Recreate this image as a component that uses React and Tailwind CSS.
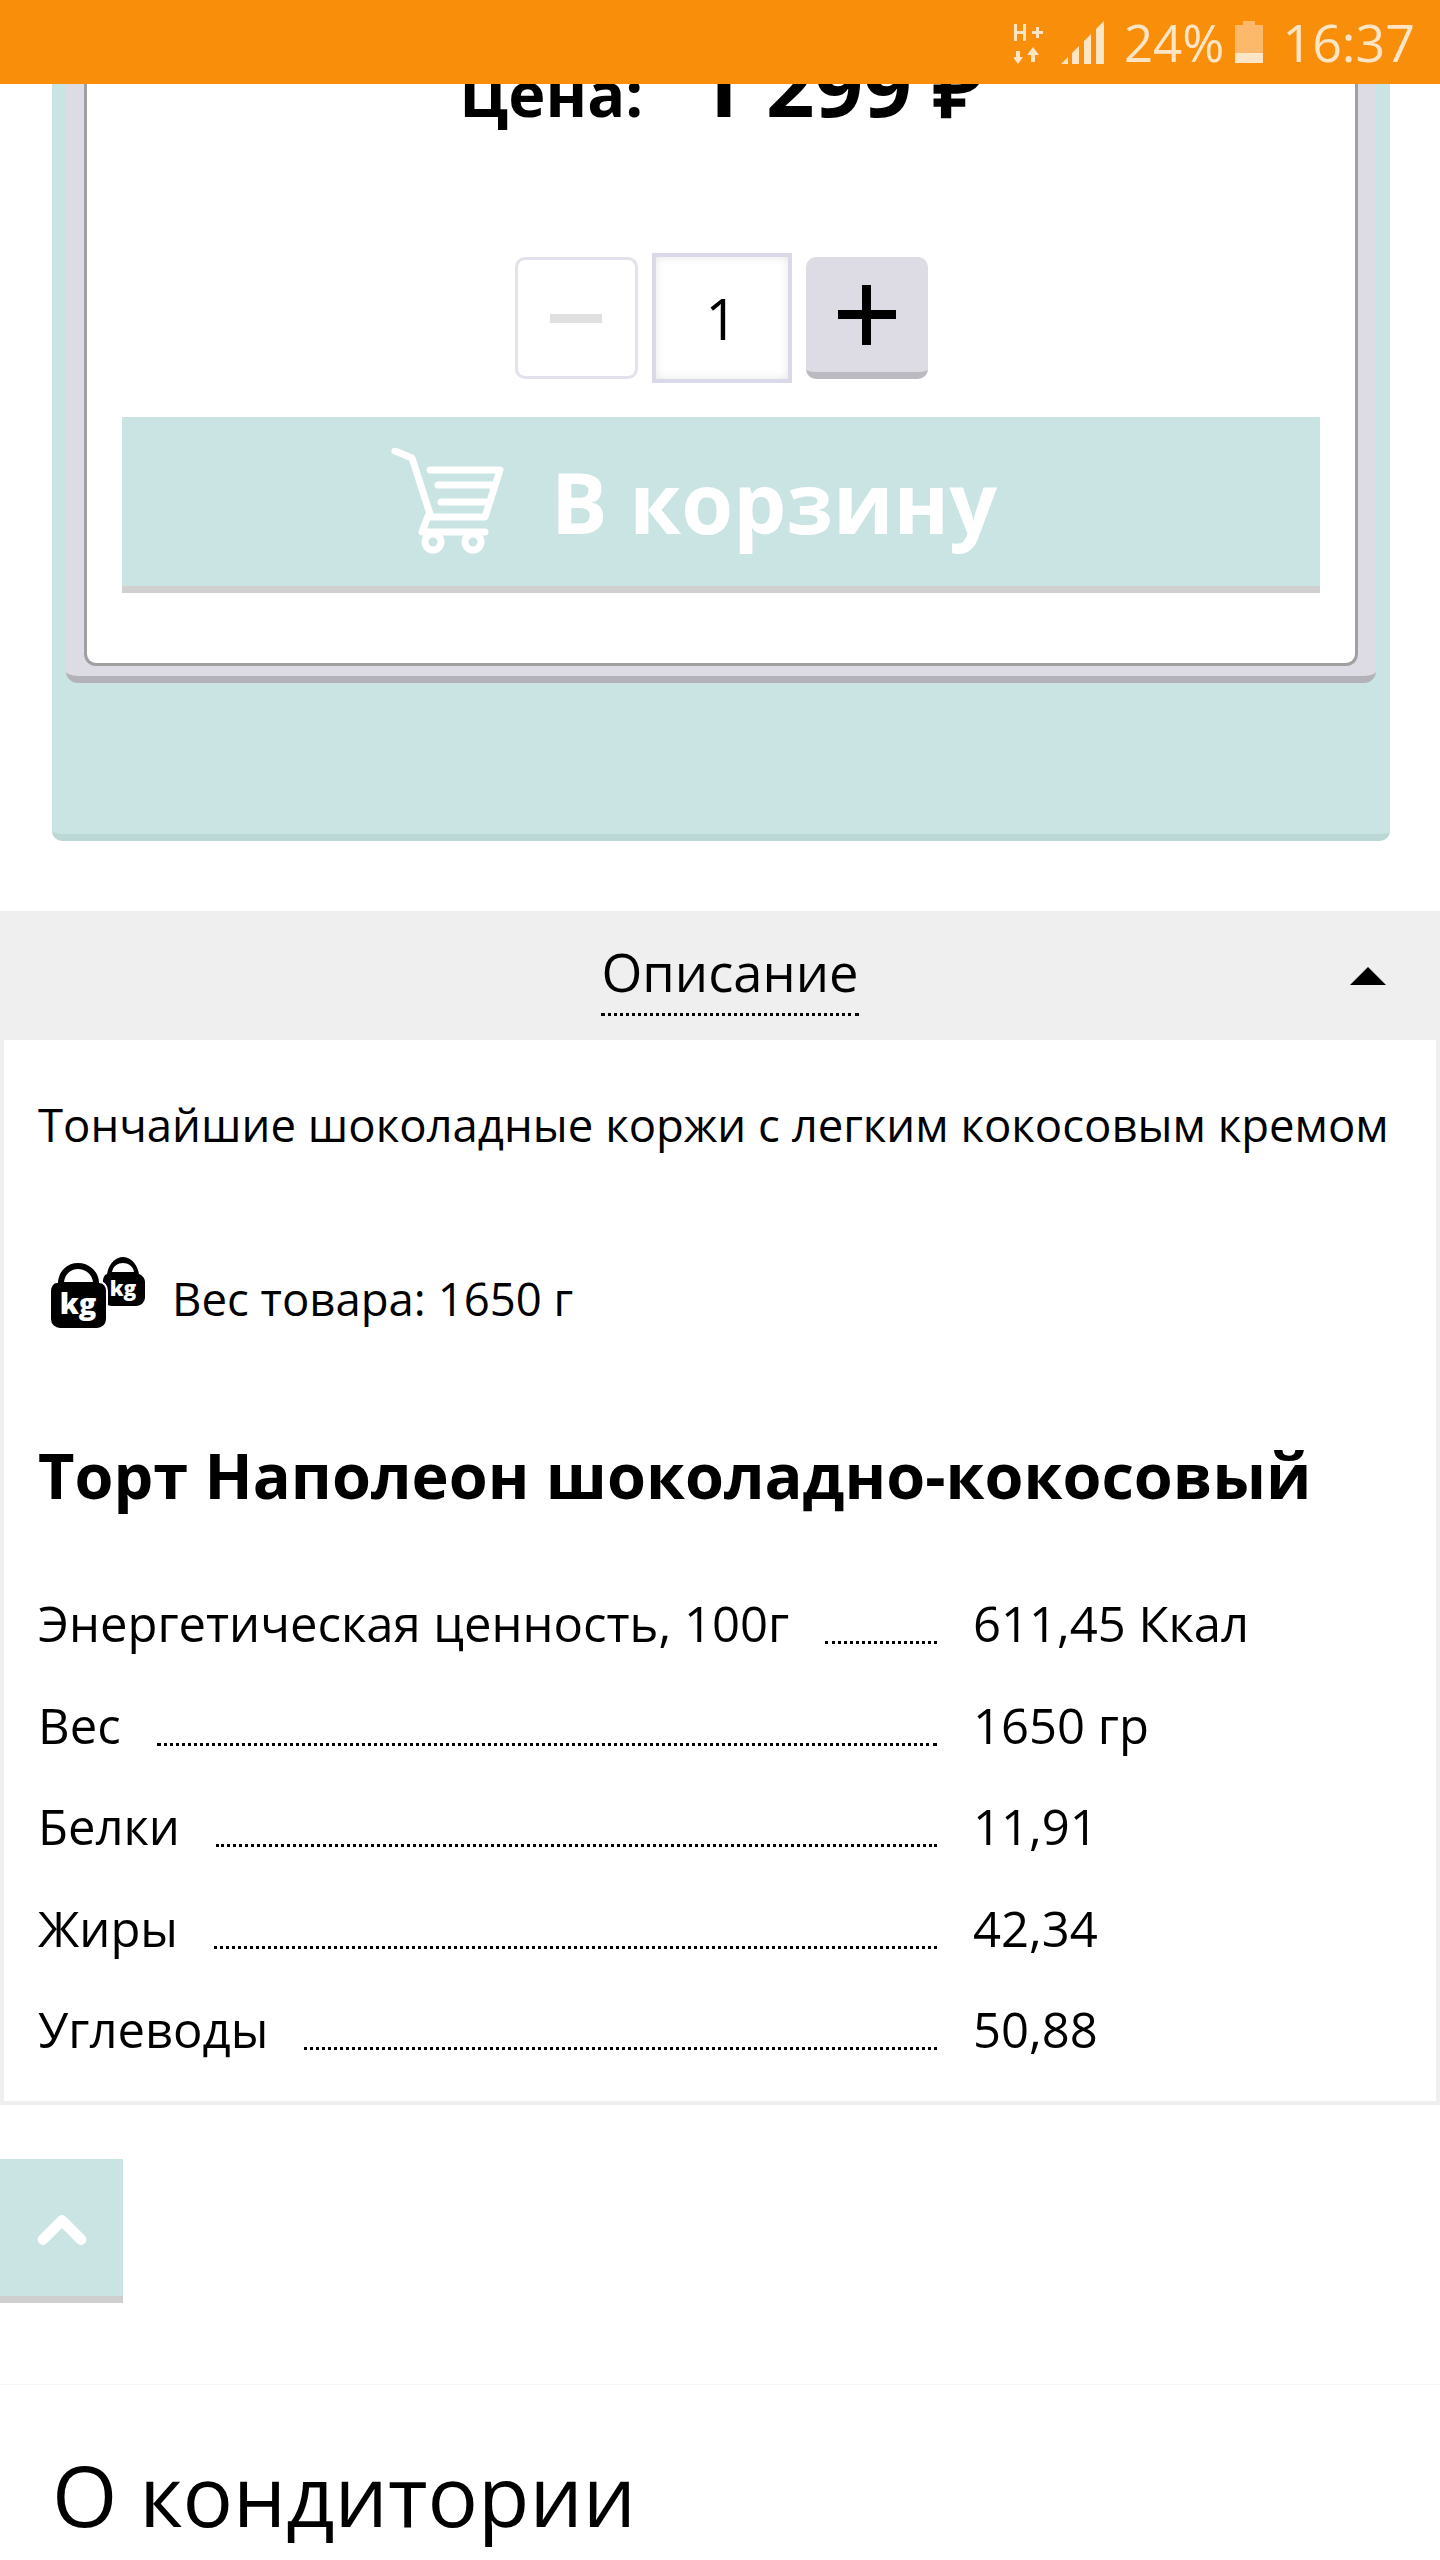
import { ChevronUp } from "lucide-react"

const font = { fontFamily: '"Open Sans", sans-serif' }

function StatusBar() {
  return (
    <div className="absolute inset-x-0 top-0 z-10 flex h-[84px] items-center justify-end bg-[#f88e0a] pr-[25px] text-[#fde5c6]">
      <svg width="30" height="42" viewBox="0 0 30 42" className="mr-[17px] mt-[2px]" fill="#fde5c6">
        <path d="M0 2h3v7h6V2h3v17H9v-7H3v7H0zM18 9h4V5h3v4h4v3h-4v4h-3v-4h-4z" />
        <path d="M4 42l-5-7h3v-6h4v6h3zM19 25l6 8h-4v7h-4v-7h-4z" />
      </svg>
      <svg width="43" height="43" viewBox="0 0 43 43" className="mr-[20px]" fill="#fde5c6">
        <path d="M0 43l7-7v7zM11 32l7-7v18h-7zM23 20l7-7v30h-7zM35 8l8-8v43h-8z" />
      </svg>
      <span className="text-[51px]">24%</span>
      <svg width="28" height="42" viewBox="0 0 28 42" className="ml-[11px] mr-[19px]">
        <path d="M8 0h12v4h8v38H0V4h8z" fill="#fcb96b" />
        <path d="M0 32h28v10H0z" fill="#fde5c6" />
      </svg>
      <span className="text-[52px]">16:37</span>
    </div>
  )
}

function CartIcon() {
  return (
    <svg width="114" height="108" viewBox="0 0 114 108" fill="none" stroke="#fff" strokeWidth="7" strokeLinecap="round" strokeLinejoin="round">
      <path d="M4 3l17 7 19 59h54l15-47H39" />
      <path d="M47 37h53M50 54h45" />
      <path d="M37 68l-6 16h63" />
      <circle cx="42" cy="94" r="8" />
      <circle cx="82" cy="94" r="8" />
    </svg>
  )
}

function WeightIcon() {
  return (
    <svg width="96" height="74" viewBox="0 0 96 74" className="-mt-[8px] shrink-0">
      <path d="M57 17C59 6 66 0 73 0s14 6 16 17h0c3 1 6 4 6 8v15c0 5-4 9-9 9H62c-5 0-9-4-9-9V25c0-4 1-7 4-8z" fill="#000" />
      <path d="M62 15c1-6 6-9 11-9s10 3 11 9z" fill="#fff" />
      <path d="M7 25C8 13 17 5 28 5s21 8 22 20h-1c5 0 8 4 8 9v28c0 6-5 10-10 10H10C5 72 0 68 0 62V34c0-5 3-9 7-9z" fill="#000" stroke="#fff" strokeWidth="2" />
      <path d="M14 25c1-8 7-13 14-13s14 5 15 13z" fill="#fff" />
      <text x="28" y="57" textAnchor="middle" fontSize="29" fontWeight="800" fill="#fff" style={font}>kg</text>
      <text x="73" y="39" textAnchor="middle" fontSize="21" fontWeight="800" fill="#fff" style={font}>kg</text>
    </svg>
  )
}

const rows = [
  { label: "Энергетическая ценность, 100г", value: "611,45 Ккал" },
  { label: "Вес", value: "1650 гр" },
  { label: "Белки", value: "11,91" },
  { label: "Жиры", value: "42,34" },
  { label: "Углеводы", value: "50,88" },
]

export default function App() {
  return (
    <div className="relative h-[2560px] w-[1440px] overflow-hidden bg-white text-black" style={font}>
      <StatusBar />

      {/* карточка товара */}
      <div className="ml-[52px] mr-[50px] h-[841px] rounded-b-[10px] border-b-[7px] border-[#bcd8d6] bg-[#c9e4e2] px-[14px]">
        <div className="h-[683px] rounded-b-[12px] border-b-[7px] border-[#b3b2b8] bg-[#dddce4] px-[18px] pb-[10px]">
          <div className="flex h-full flex-col items-center rounded-b-[12px] border-x-[3px] border-b-[3px] border-[#a0a0a0] bg-white px-[35px] pt-[42px]">
            <div className="flex h-[85px] items-baseline font-bold leading-none">
              <span className="mr-[52px] text-[63px]">Цена:</span>
              <span className="text-[85px]">1 299 ₽</span>
            </div>

            <div className="mt-[126px] flex items-center">
              <div className="flex h-[122px] w-[123px] items-center justify-center rounded-[10px] border-[3px] border-[#e3e2ec] bg-white">
                <div className="h-[9px] w-[52px] bg-[#e0e0e0]" />
              </div>
              <div className="mx-[14px] flex h-[130px] w-[140px] items-center justify-center border-[4px] border-[#dad9e8] bg-white text-[56px] shadow-[inset_0_0_10px_rgba(0,0,0,0.1)]">
                1
              </div>
              <div className="relative flex h-[122px] w-[122px] items-center justify-center rounded-[10px] border-b-[7px] border-[#bbbac0] bg-[#dddce4]">
                <div className="h-[9px] w-[58px] bg-black" />
                <div className="absolute h-[60px] w-[9px] bg-black" />
              </div>
            </div>

            <div className="mt-[34px] flex h-[176px] w-full items-center justify-center gap-[46px] border-b-[7px] border-[#d0d0d0] bg-[#c9e4e2] pr-[54px] text-[84px] font-bold leading-none text-white">
              <CartIcon />
              <span>В корзину</span>
            </div>
          </div>
        </div>
      </div>

      {/* описание */}
      <div className="mt-[70px]">
        <div className="relative flex h-[129px] items-start justify-center bg-[#efefef] pt-[26px]">
          <span className="ml-[20px] border-b-[3px] border-dotted border-black pb-[6px] text-[52.5px] leading-[70px]">Описание</span>
          <div className="absolute right-[54px] top-[56px] h-0 w-0 border-x-[18px] border-b-[18px] border-x-transparent border-b-black" />
        </div>
        <div className="h-[1065px] border-x-[4px] border-b-[4px] border-[#efefef] pl-[34px] pr-[20px] pt-[49px]">
          <p className="whitespace-nowrap text-[45.5px] leading-[70px]">Тончайшие шоколадные коржи с легким кокосовым кремом</p>
          <div className="mt-[102px] flex h-[74px] items-center gap-[26px] pl-[12px] text-[45.5px]">
            <WeightIcon />
            <span>Вес товара: 1650 г</span>
          </div>
          <h2 className="mt-[100px] whitespace-nowrap text-[63px] font-bold leading-[80px]">Торт Наполеон шоколадно-кокосовый</h2>
          <div className="mt-[58px]">
            {rows.map((r) => (
              <div key={r.label} className="flex h-[101.5px] items-center text-[49px]">
                <span className="whitespace-nowrap">{r.label}</span>
                <div className="mx-[36px] mt-[38px] flex-1 border-b-[3px] border-dotted border-black" />
                <span className="w-[443px] whitespace-nowrap">{r.value}</span>
              </div>
            ))}
          </div>
        </div>
      </div>

      {/* наверх */}
      <div className="mt-[54px] flex h-[144px] w-[123px] items-center justify-center border-b-[7px] border-[#cfcfcf] bg-[#c9e4e2] pt-[5px] text-white">
        <ChevronUp size={76} strokeWidth={3.4} />
      </div>

      <div className="mt-[81px] border-t border-[#f4f8f8] pl-[52px] pt-[49px] text-[84px] leading-[122px]">О кондитории</div>
    </div>
  )
}
